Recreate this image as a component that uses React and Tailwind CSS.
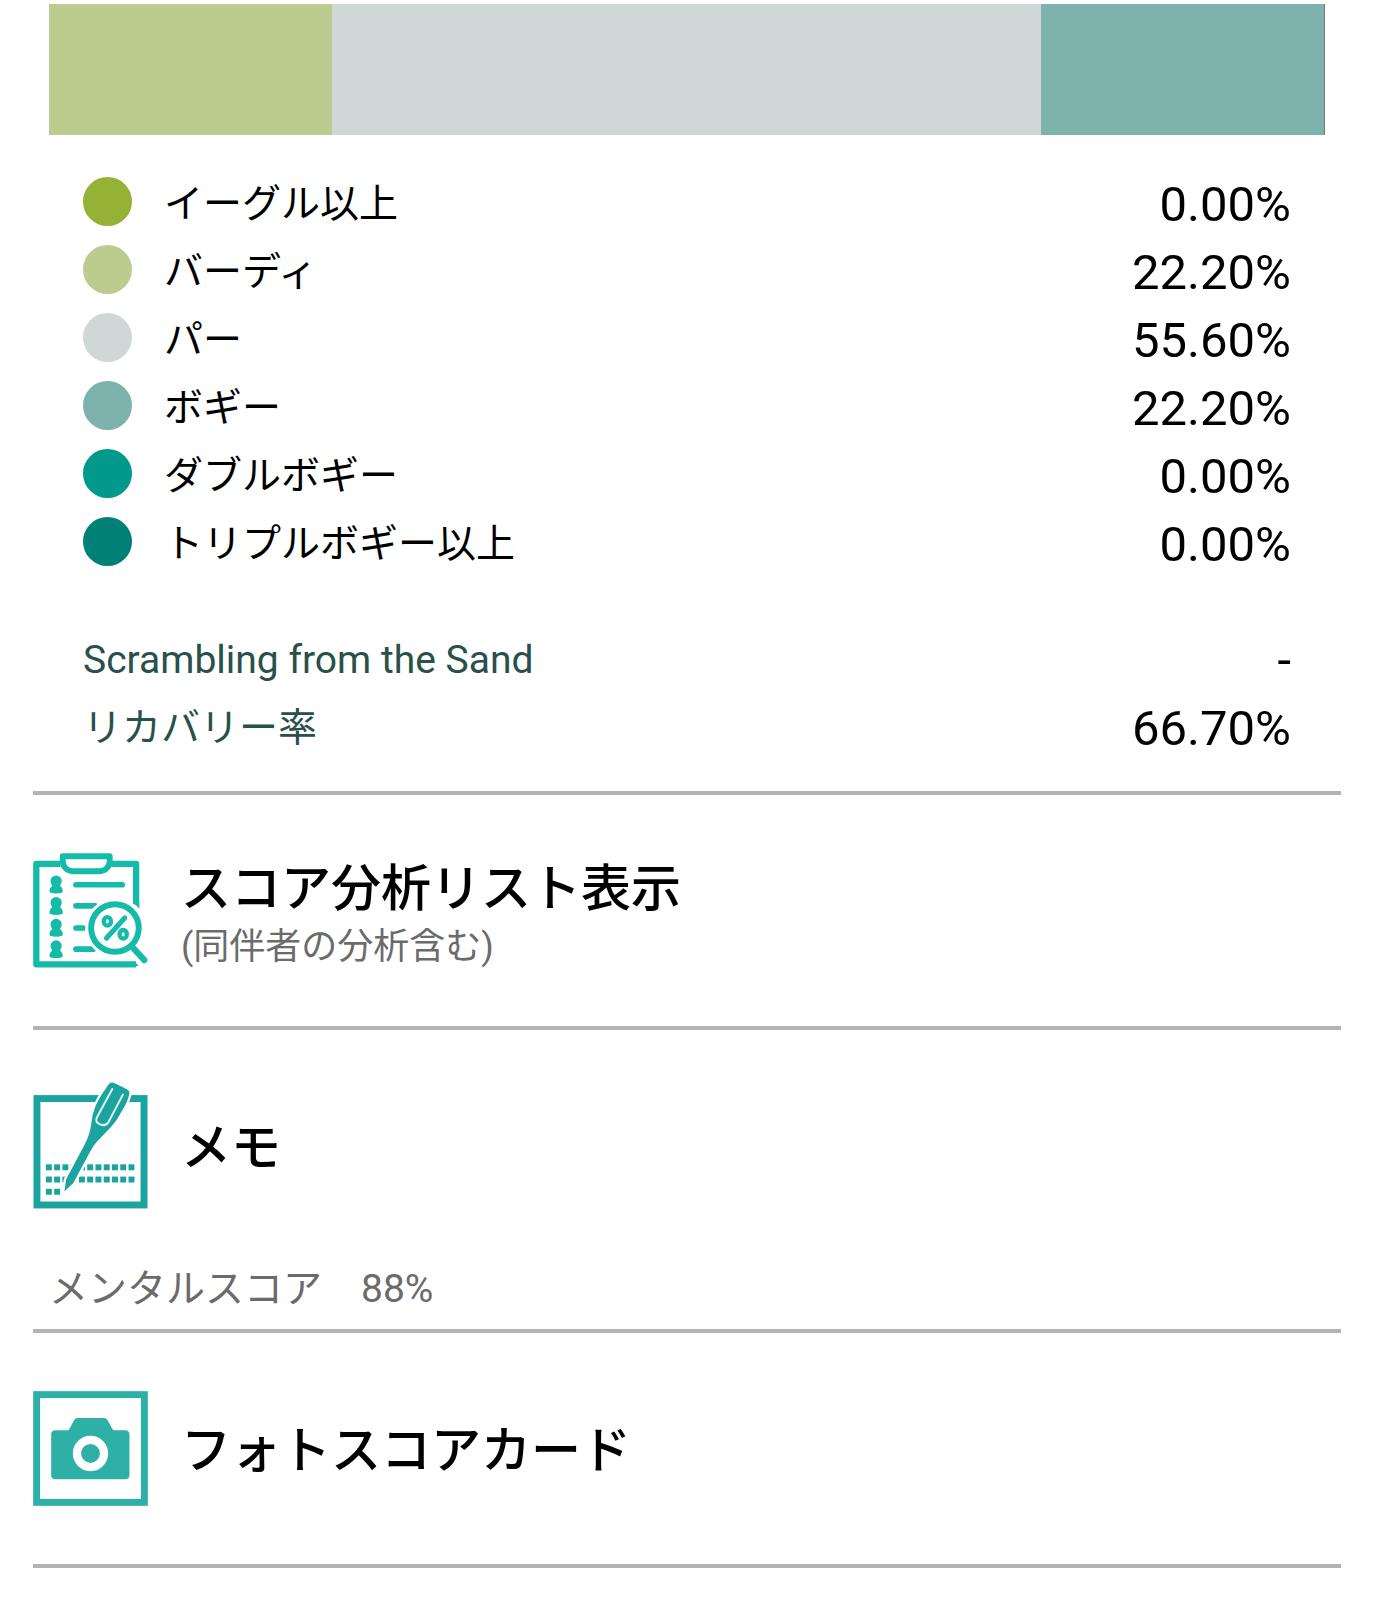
const scores = [
  { label: 'イーグル以上', value: 0, dot: 'bg-[#93b236]' },
  { label: 'バーディ', value: 22.2, dot: 'bg-[#bccc8f]' },
  { label: 'パー', value: 55.6, dot: 'bg-[#cfd8d6]' },
  { label: 'ボギー', value: 22.2, dot: 'bg-[#7eb2ad]' },
  { label: 'ダブルボギー', value: 0, dot: 'bg-[#01998b]' },
  { label: 'トリプルボギー以上', value: 0, dot: 'bg-[#018175]' },
]

const rates = [
  { label: 'Scrambling from the Sand', value: '-' },
  { label: 'リカバリー率', value: '66.70%' },
]

const playerRows = [0, 65, 131, 196]
const memoDots = [0, 1, 2, 3, 4, 5, 6, 7, 8, 9, 10]

function ListIcon() {
  return (
    <svg viewBox="0 0 348 348" className="size-[115px] shrink-0" fill="none" stroke="#14bba9" aria-hidden="true">
      <path
        d="M83 33H10v304h302M237 33h75v122"
        strokeWidth="19"
        strokeLinejoin="round"
      />
      <path d="M302 150h20v18z" fill="#14bba9" stroke="none" />
      <path d="M305 326l15 16h-15z" fill="#14bba9" stroke="none" />
      <path d="M90 10h142v15a30 30 0 0 1-30 30h-82a30 30 0 0 1-30-30z" strokeWidth="18" strokeLinejoin="round" />
      {playerRows.map((y) => (
        <g key={y} transform={`translate(0 ${y})`} fill="#14bba9" stroke="none">
          <circle cx="70" cy="85" r="17" />
          <path d="M57 90h26v11c5 2 7 7 7 14 0 4-1 5-4 5-10 3-22 3-32 0-3 0-4-1-4-5 0-7 2-12 7-14z" />
        </g>
      ))}
      <path d="M130 96h140" strokeWidth="17" strokeLinecap="round" />
      <path d="M130 160h58M130 227h22M130 291h52" strokeWidth="17" strokeLinecap="round" />
      <circle cx="248" cy="227" r="90" fill="#fff" stroke="none" />
      <circle cx="248" cy="227" r="72" strokeWidth="18" />
      <path d="M300 284l37 40" strokeWidth="19" strokeLinecap="round" />
      <path d="M278 196l-56 62" strokeWidth="15" strokeLinecap="round" />
      <ellipse cx="225" cy="207" rx="11" ry="13" strokeWidth="13" />
      <ellipse cx="273" cy="246" rx="11" ry="13" strokeWidth="13" />
    </svg>
  )
}

function MemoIcon() {
  return (
    <svg viewBox="0 0 348 384" className="h-[127px] w-[115px] shrink-0" aria-hidden="true">
      <rect x="12" y="50" width="324" height="322" fill="none" stroke="#1ba39f" strokeWidth="21" />
      <g fill="#1ba39f">
        {memoDots.map((n) => (
          <rect key={n} x={39 + n * 25} y="249" width="18" height="18" />
        ))}
        {memoDots.map((n) => (
          <rect key={n} x={39 + n * 25} y="286" width="18" height="18" />
        ))}
        <rect x="39" y="323" width="18" height="18" />
        <rect x="64" y="323" width="18" height="18" />
      </g>
      <path
        d="M230 6C234 1 240 0 246 3L284 22C291 26 293 31 291 38C286 62 275 78 262 100C252 118 246 125 236 136L196 178C185 190 180 198 174 209L124 302C120 310 116 312 110 317L95 331L99 303C99 297 101 292 104 287L152 197C162 178 168 165 173 145C179 120 177 105 186 82C194 58 212 30 230 6Z"
        fill="#1ba39f"
        stroke="#fff"
        strokeWidth="14"
        paintOrder="stroke"
      />
      <path
        d="M240 21l-46 85c-6 11-2 17 9 22 12 5 20 3 26-8l43-82"
        fill="none"
        stroke="#e2f7f5"
        strokeWidth="6"
        strokeLinecap="round"
      />
    </svg>
  )
}

function CameraIcon() {
  return (
    <svg viewBox="0 0 348 348" className="size-[115px] shrink-0" aria-hidden="true">
      <rect x="11" y="11" width="326" height="326" fill="none" stroke="#2eb0a7" strokeWidth="21" />
      <path
        d="M68 119h35c5 0 6-3 9-8l11-20c3-6 6-9 12-9h80c6 0 9 3 12 9l12 22c3 5 4 6 9 6h31c9 0 13 5 13 13v122c0 9-4 13-13 13H68c-9 0-13-4-13-13V132c0-8 4-13 13-13z"
        fill="#2eb0a7"
      />
      <circle cx="174" cy="189" r="41" fill="none" stroke="#fff" strokeWidth="25" />
    </svg>
  )
}

function MenuRow({ icon, title, note }) {
  return (
    <button type="button" className="flex w-full items-center gap-[33px] text-left">
      {icon}
      <span className="flex flex-col pt-[5px]">
        <span className="text-[50px] leading-[60px] font-medium text-black">{title}</span>
        {note ? <span className="mt-2 text-[36px] leading-[40px] text-[#6b6b6b]">{note}</span> : null}
      </span>
    </button>
  )
}

function App() {
  return (
    <main className="bg-white px-[33px] pt-1 font-['Roboto','Noto_Sans_CJK_JP',sans-serif] text-black" lang="ja">
      <section className="border-b-4 border-[#b3b3b3] pb-8">
        <div className="mx-4 flex h-[131px] border-r border-[#777]">
          {scores.map((score) => (
            <div key={score.label} className={score.dot} style={{ width: `${score.value}%` }} />
          ))}
        </div>

        <dl className="mt-8 px-[50px]">
          {scores.map((score) => (
            <div key={score.label} className="flex h-[68px] items-center">
              <span className={`mr-8 size-[49px] rounded-full ${score.dot}`} />
              <dt className="pt-[6px] text-[39px] leading-[60px]">{score.label}</dt>
              <dd className="ml-auto pt-2 text-[49px] leading-[60px]">{score.value.toFixed(2)}%</dd>
            </div>
          ))}
        </dl>

        <dl className="mt-12 px-[50px]">
          {rates.map((rate) => (
            <div key={rate.label} className="flex h-[68px] items-center justify-between">
              <dt className="pt-[6px] text-[39px] leading-[60px] text-[#29504b]">{rate.label}</dt>
              <dd className="pt-2 text-[49px] leading-[60px]">{rate.value}</dd>
            </div>
          ))}
        </dl>
      </section>

      <section className="border-b-4 border-[#b3b3b3] py-[58px]">
        <MenuRow icon={<ListIcon />} title="スコア分析リスト表示" note="(同伴者の分析含む)" />
      </section>

      <section className="border-b-4 border-[#b3b3b3] pt-[52px] pb-[11px]">
        <MenuRow icon={<MemoIcon />} title="メモ" />
        <p className="mt-[52px] px-4 text-[39px] leading-[57px] text-[#6b6b6b]">メンタルスコア　88%</p>
      </section>

      <section className="border-b-4 border-[#b3b3b3] py-[58px]">
        <MenuRow icon={<CameraIcon />} title="フォトスコアカード" />
      </section>
    </main>
  )
}

export default App
